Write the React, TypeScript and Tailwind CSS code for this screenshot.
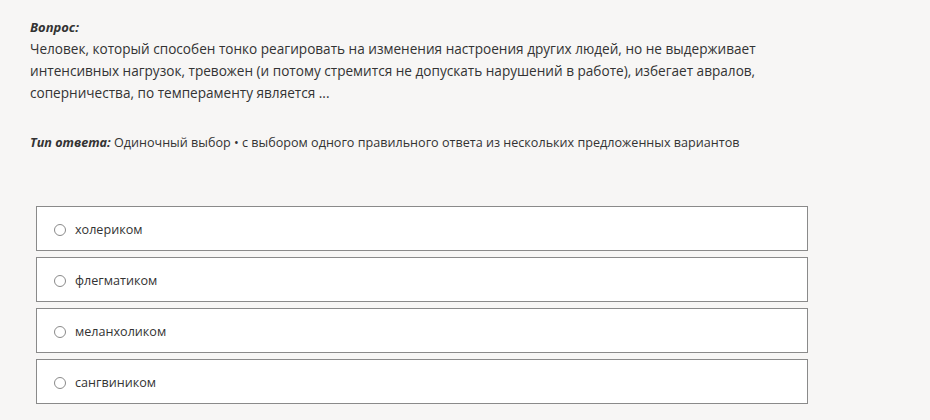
import { useState } from "react";

const options = ["холериком", "флегматиком", "меланхоликом", "сангвиником"];

export default function App() {
  const [selected, setSelected] = useState<number | null>(null);

  return (
    <div
      className="min-h-[420px] w-full bg-[#f7f6f5] text-[#333333] text-[13px]"
      style={{ fontFamily: '"Open Sans", "Noto Sans", sans-serif' }}
    >
      <div className="pl-[30px] pt-[16px]">
        {/* Вопрос */}
        <div className="text-[13.6px] leading-[22px]">
          <div className="text-[13px] font-bold italic">Вопрос:</div>
          <div className="w-[800px]">
            Человек, который способен тонко реагировать на изменения настроения других людей, но не выдерживает
            <br />
            интенсивных нагрузок, тревожен (и потому стремится не допускать нарушений в работе), избегает авралов,
            <br />
            соперничества, по темпераменту является ...
          </div>
        </div>

        <div className="mt-[28px] text-[12.6px] leading-[22px]">
          <span className="font-bold italic">Тип ответа:</span> Одиночный выбор • с выбором одного правильного
          ответа из нескольких предложенных вариантов
        </div>
      </div>

      {/* Варианты */}
      <div className="mt-[52px] ml-[36px] flex w-[772px] flex-col gap-[6px]">
        {options.map((opt, i) => (
          <label
            key={opt}
            className="flex h-[45px] cursor-pointer items-center border border-[#8a8a8a] bg-white pl-[17px] pt-[3px] text-[12.6px]"
            onClick={() => setSelected(i)}
          >
            <span className="flex h-[12px] w-[12px] items-center justify-center rounded-full border border-[#8a8a8a] bg-white">
              {selected === i && <span className="h-[6px] w-[6px] rounded-full bg-[#333]" />}
            </span>
            <span className="ml-[9px]">{opt}</span>
          </label>
        ))}
      </div>
    </div>
  );
}
